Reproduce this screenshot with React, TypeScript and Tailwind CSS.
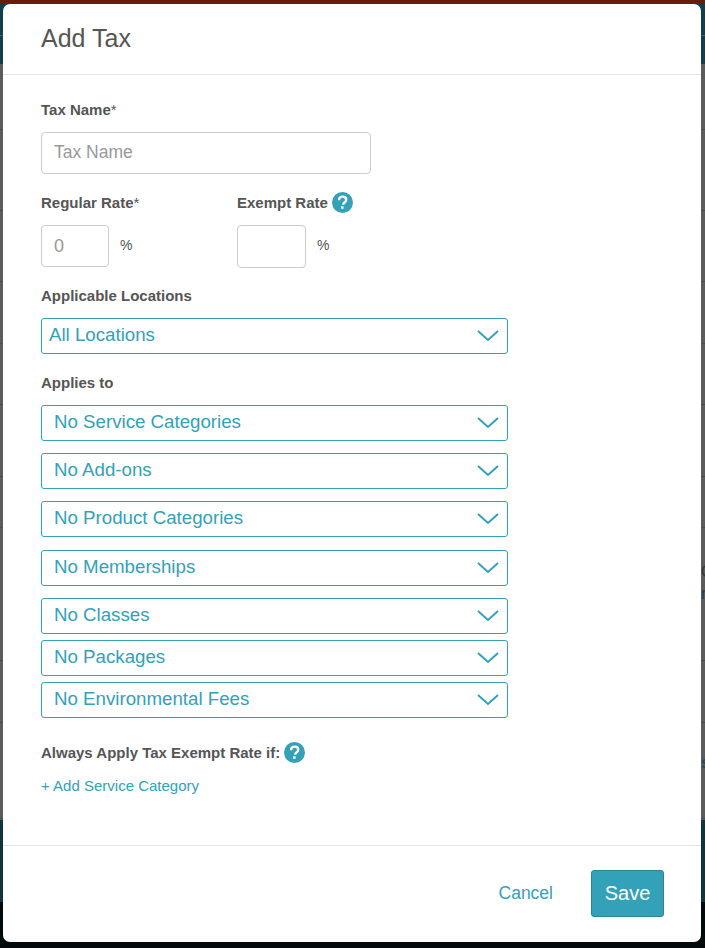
import React from 'react'

const HelpIcon = () => (
  <svg width="21" height="21" viewBox="0 0 21 21" className="shrink-0">
    <circle cx="10.5" cy="10.5" r="10.5" fill="#33a1b8" />
    <path d="M7 8.2c0-2.2 1.6-3.5 3.6-3.5 2.1 0 3.6 1.2 3.6 3 0 1.4-.8 2.1-1.7 2.8-.8.6-1.2 1-1.2 1.9v.4" fill="none" stroke="#fff" strokeWidth="2.3" />
    <rect x="9.1" y="14.3" width="2.5" height="2.5" fill="#fff" />
  </svg>
)

const Select = ({ label, first, className }: { label: string; first?: boolean; className?: string }) => (
  <div className={`flex h-[36px] w-[467px] items-center justify-between rounded-[3px] border border-[#33a1b8] pr-[8px] text-[18.7px] text-[#33a1b8] ${first ? 'pl-[7px]' : 'pl-[12px]'} ${className ?? ''}`}>
    <span className="mb-[1px]">{label}</span>
    <svg width="22" height="12" viewBox="0 0 22 12" className="mb-[1px]">
      <path d="M1 1l10 9 10-9" fill="none" stroke="#33a1b8" strokeWidth="2" />
    </svg>
  </div>
)

const Label = ({ children, className }: { children: React.ReactNode; className?: string }) => (
  <div className={`text-[15px] leading-[18px] font-bold text-[#555] ${className ?? ''}`}>{children}</div>
)

const rows = [66, 81, 71, 62, 61, 72, 51, 133, 62, 96]

export default function App() {
  return (
    <div className="relative h-[948px] w-[705px] overflow-hidden font-['Liberation_Sans',sans-serif]">
      {/* page behind the dialog */}
      <div className="flex h-full flex-col">
        <div className="h-[3px] bg-[#6b1a0e]" />
        <div className="h-[33px] border-b border-[#3b6a72] bg-[#123f49]" />
        <div className="h-[28px] bg-[#123f49]" />
        <div className="flex flex-1 flex-col bg-[#5c5c5c]">
          {rows.map((h, i) => (
            <div key={i} className="border-b border-[#4c4c4c]" style={{ height: h }} />
          ))}
        </div>
        <div className="h-[82px] bg-[#12343d]" />
        <div className="h-[46px] bg-[#020a0c]" />
      </div>
      <span className="absolute top-[563px] left-[701px] text-[16px] leading-[18px] text-[#2c3a40]">C</span>
      <span className="absolute top-[585px] left-[701px] text-[16px] leading-[18px] text-[#16405c]">r</span>
      <span className="absolute top-[754px] left-[701px] text-[16px] leading-[18px] font-bold text-[#1c4f5c]">s</span>

      <div className="absolute top-[4px] left-[3px] flex h-[938px] w-[698px] flex-col rounded-[7px] bg-white">
        <div className="flex h-[71px] shrink-0 items-center border-b border-[#e5e5e5] pl-[38px] text-[25px] text-[#555]">
          Add Tax
        </div>

        <div className="flex-1 pl-[38px]">
          <Label className="mt-[26px]">Tax Name<span className="font-normal">*</span></Label>
          <div className="mt-[13px] flex h-[42px] w-[330px] items-center rounded-[4px] border border-[#ccc] pb-[2px] pl-[12px] text-[17.5px] text-[#999]">
            Tax Name
          </div>

          <div className="mt-[18px] flex">
            <div className="w-[196px]">
              <Label className="flex h-[21px] items-center">Regular Rate<span className="font-normal">*</span></Label>
              <div className="mt-[12px] flex items-center">
                <div className="flex h-[42px] w-[68px] items-center rounded-[4px] border border-[#ccc] pl-[12px] text-[18px] text-[#999]">0</div>
                <span className="mb-[2px] ml-[11px] text-[14px] text-[#555]">%</span>
              </div>
            </div>
            <div>
              <Label className="flex h-[21px] items-center gap-[4px]">Exempt Rate <HelpIcon /></Label>
              <div className="mt-[12px] flex items-center">
                <div className="h-[43px] w-[69px] rounded-[4px] border border-[#ccc]" />
                <span className="mb-[3px] ml-[11px] text-[14px] text-[#555]">%</span>
              </div>
            </div>
          </div>

          <Label className="mt-[19px]">Applicable Locations</Label>
          <Select label="All Locations" first className="mt-[13px]" />

          <Label className="mt-[20px]">Applies to</Label>
          <Select label="No Service Categories" className="mt-[13px]" />
          <Select label="No Add-ons" className="mt-[12px]" />
          <Select label="No Product Categories" className="mt-[12px]" />
          <Select label="No Memberships" className="mt-[13px]" />
          <Select label="No Classes" className="mt-[12px]" />
          <Select label="No Packages" className="mt-[6px]" />
          <Select label="No Environmental Fees" className="mt-[6px]" />

          <Label className="mt-[24px] flex h-[21px] items-center gap-[4px]">Always Apply Tax Exempt Rate if: <HelpIcon /></Label>
          <div className="mt-[14px] text-[15px] leading-[18px] text-[#33a1b8]">+ Add Service Category</div>
        </div>

        <div className="flex h-[97px] shrink-0 items-start justify-end border-t border-[#e5e5e5] pt-[24px] pr-[37px]">
          <span className="mt-[13px] mr-[38px] text-[17.5px] leading-[21px] text-[#33a1b8]">Cancel</span>
          <div className="flex h-[47px] w-[73px] items-center justify-center rounded-[3px] border border-[#2a8598] bg-[#33a1b8] pb-[2px] text-[20px] text-white">
            Save
          </div>
        </div>
      </div>
    </div>
  )
}
